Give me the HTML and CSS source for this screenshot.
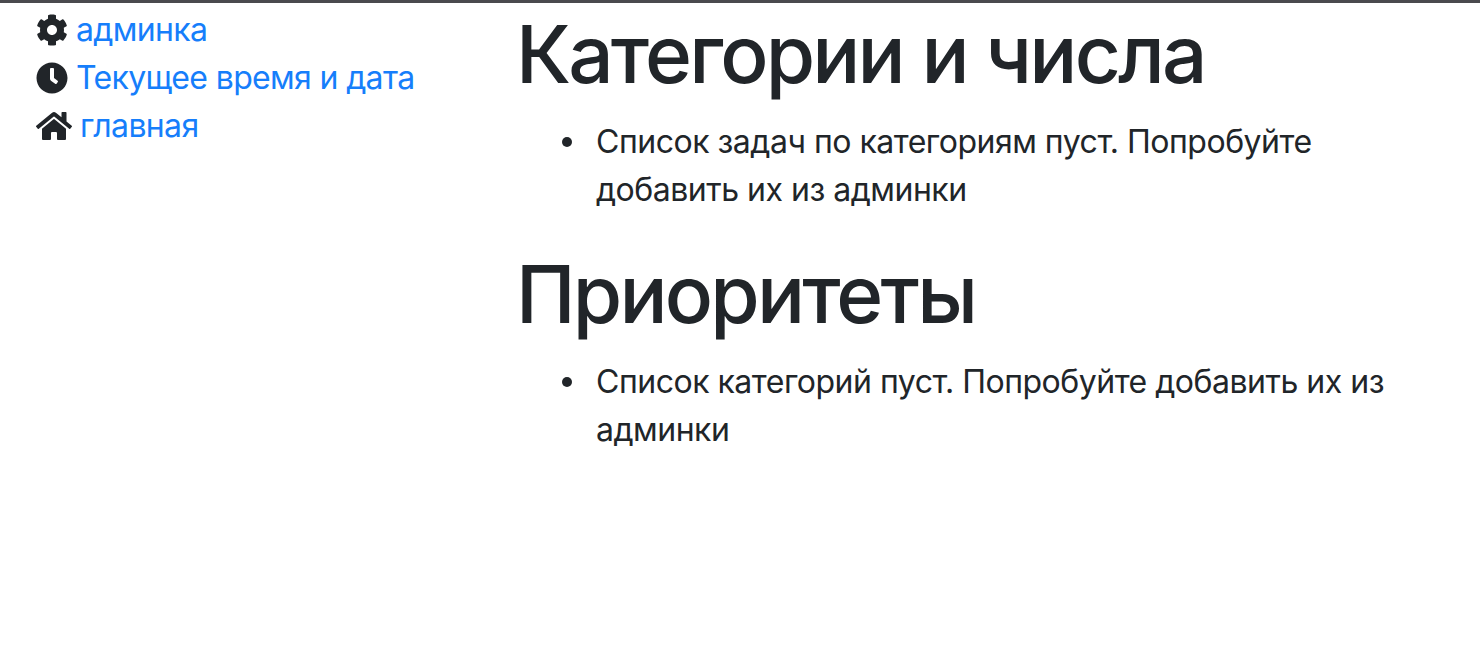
FILE: index.html
```html
<!DOCTYPE html>
<html lang="en">

<head>
    <meta charset="UTF-8">
    <meta name="viewport" content="width=device-width, initial-scale=1.0">
    <title>Категории и числа</title>
    <link rel="stylesheet" href="styles.css">
</head>

<body>

    <div class="top-line"></div>

    <div class="layout">
        <div class="sidebar">
            <div class="nav-row">
                <svg class="icon icon-gear" viewBox="0 0 512 512"><path d="M487.4 315.7l-42.6-24.6c4.3-23.2 4.3-47 0-70.2l42.6-24.6c4.9-2.8 7.1-8.6 5.5-14-11.1-35.6-30-67.8-54.7-94.6-3.8-4.1-10-5.1-14.8-2.3L380.8 110c-17.9-15.4-38.5-27.3-60.8-35.1V25.8c0-5.6-3.9-10.5-9.4-11.7-36.7-8.2-74.3-7.8-109.2 0-5.5 1.2-9.4 6.1-9.4 11.7V75c-22.2 7.9-42.8 19.8-60.8 35.1L88.7 85.5c-4.9-2.8-11-1.9-14.8 2.3-24.7 26.7-43.6 58.9-54.7 94.6-1.7 5.4.6 11.2 5.5 14L67.3 221c-4.3 23.2-4.3 47 0 70.2l-42.6 24.6c-4.9 2.8-7.1 8.6-5.5 14 11.1 35.6 30 67.8 54.7 94.6 3.8 4.1 10 5.1 14.8 2.3l42.6-24.6c17.9 15.4 38.5 27.3 60.8 35.1v49.2c0 5.6 3.9 10.5 9.4 11.7 36.7 8.2 74.3 7.8 109.2 0 5.5-1.2 9.4-6.1 9.4-11.7v-49.2c22.2-7.9 42.8-19.8 60.8-35.1l42.6 24.6c4.9 2.8 11 1.9 14.8-2.3 24.7-26.7 43.6-58.9 54.7-94.6 1.5-5.5-.7-11.3-5.6-14.1zM256 336c-44.1 0-80-35.9-80-80s35.9-80 80-80 80 35.9 80 80-35.9 80-80 80z"/></svg>
                <a href="#">админка</a>
            </div>
            <div class="nav-row">
                <svg class="icon icon-clock" viewBox="0 0 512 512"><path d="M256,8C119,8,8,119,8,256S119,504,256,504,504,393,504,256,393,8,256,8Zm92.49,313h0l-20,25a16,16,0,0,1-22.49,2.5h0l-67-49.72a40,40,0,0,1-15-31.23V112a16,16,0,0,1,16-16h32a16,16,0,0,1,16,16V256l58,42.5A16,16,0,0,1,348.49,321Z"/></svg>
                <a href="#">Текущее время и дата</a>
            </div>
            <div class="nav-row">
                <svg class="icon icon-home" viewBox="0 0 576 512"><path d="M280.37 148.26L96 300.11V464a16 16 0 0 0 16 16l112.06-.29a16 16 0 0 0 15.92-16V368a16 16 0 0 1 16-16h64a16 16 0 0 1 16 16v95.64a16 16 0 0 0 16 16.05L464 480a16 16 0 0 0 16-16V300L295.67 148.26a12.19 12.19 0 0 0-15.3 0zM571.6 251.47L488 182.56V44.05a12 12 0 0 0-12-12h-56a12 12 0 0 0-12 12v72.61L318.47 43a48 48 0 0 0-61 0L4.34 251.47a12 12 0 0 0-1.6 16.9l25.5 31A12 12 0 0 0 45.15 301l235.22-193.74a12.19 12.19 0 0 1 15.3 0L530.9 301a12 12 0 0 0 16.9-1.6l25.5-31a12 12 0 0 0-1.7-16.93z"/></svg>
                <a href="#">главная</a>
            </div>
        </div>

        <div class="content">
            <h1>Категории и числа</h1>
            <ul>
                <li>Список задач по категориям пуст. Попробуйте добавить их из админки</li>
            </ul>
            <h1>Приоритеты</h1>
            <ul>
                <li>Список категорий пуст. Попробуйте добавить их из админки</li>
            </ul>
        </div>
    </div>

</body>

</html>
```

FILE: styles.css
```css
body {
    font-family: Inter, "Noto Sans", sans-serif;
    font-size: 32px;
    line-height: 48px;
    margin: 0;
    color: #212529;
    background-color: #fff;
}

.top-line {
    height: 3px;
    background-color: #4a4a4e;
}

.layout {
    display: grid;
    grid-template-columns: 516px 1fr;
    padding-top: 3px;
    padding-right: 80px;
}

.sidebar {
    padding-left: 36px;
    letter-spacing: -0.65px;
}

.nav-row {
    display: flex;
    align-items: center;
    gap: 8px;
    height: 48px;
}

.icon {
    height: 32px;
    fill: #212529;
    flex-shrink: 0;
}

.icon-gear,
.icon-clock {
    width: 32px;
}

.icon-home {
    width: 36px;
}

a {
    color: #167efb;
    text-decoration: none;
}

h1 {
    font-size: 80px;
    font-weight: 500;
    line-height: 96px;
    letter-spacing: -2.8px;
    margin: 0 0 16px;
}

ul {
    margin: 0 0 32px;
    padding-left: 80px;
    list-style: none;
    letter-spacing: -0.49px;
}

li {
    position: relative;
}

li::before {
    content: "";
    position: absolute;
    left: -34px;
    top: 19px;
    width: 10px;
    height: 10px;
    border-radius: 50%;
    background-color: #212529;
}
```
